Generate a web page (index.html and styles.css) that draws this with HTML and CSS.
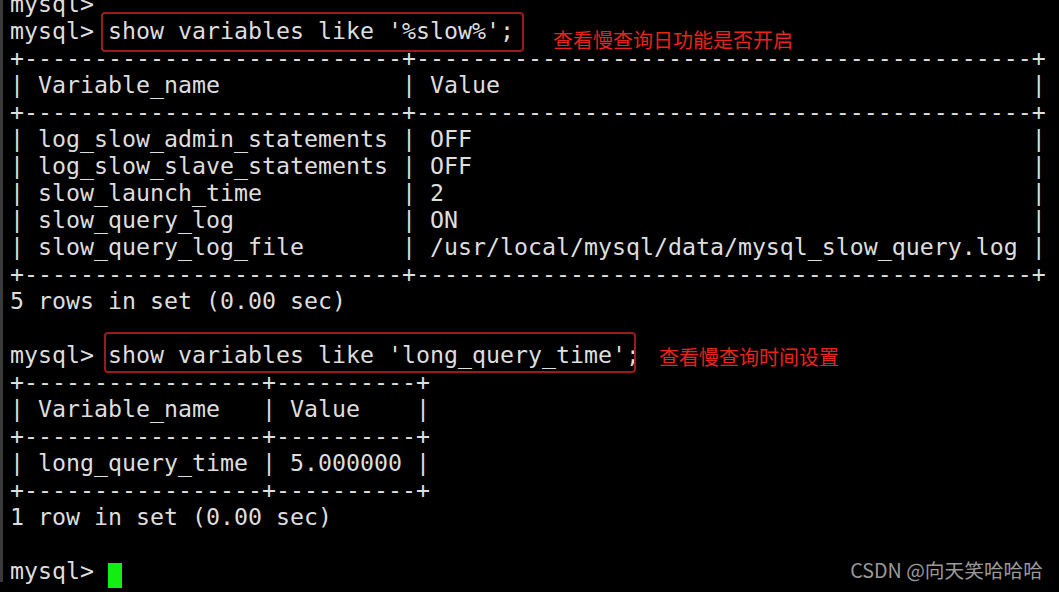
FILE: index.html
```html
<!DOCTYPE html>
<html>
<head>
<meta charset="utf-8">
<link rel="stylesheet" href="styles.css">
</head>
<body>
<div class="term">
<div class="line">mysql&gt;</div>
<div class="line">mysql&gt; <span class="cmd cmd-a">show variables like '%slow%';</span><span class="note note-a">查看慢查询日功能是否开启</span></div>
<div class="line">+---------------------------+--------------------------------------------+</div>
<div class="line">| Variable_name             | Value                                      |</div>
<div class="line">+---------------------------+--------------------------------------------+</div>
<div class="line">| log_slow_admin_statements | OFF                                        |</div>
<div class="line">| log_slow_slave_statements | OFF                                        |</div>
<div class="line">| slow_launch_time          | 2                                          |</div>
<div class="line">| slow_query_log            | ON                                         |</div>
<div class="line">| slow_query_log_file       | /usr/local/mysql/data/mysql_slow_query.log |</div>
<div class="line">+---------------------------+--------------------------------------------+</div>
<div class="line">5 rows in set (0.00 sec)</div>
<div class="line"> </div>
<div class="line">mysql&gt; <span class="cmd cmd-b">show variables like 'long_query_time';</span><span class="note note-b">查看慢查询时间设置</span></div>
<div class="line">+-----------------+----------+</div>
<div class="line">| Variable_name   | Value    |</div>
<div class="line">+-----------------+----------+</div>
<div class="line">| long_query_time | 5.000000 |</div>
<div class="line">+-----------------+----------+</div>
<div class="line">1 row in set (0.00 sec)</div>
<div class="line"> </div>
<div class="line">mysql&gt; <span class="cursor"> </span></div>
</div>
<div class="watermark">CSDN @向天笑哈哈哈</div>
</body>
</html>
```

FILE: styles.css
```css
html, body {
  margin: 0;
  padding: 0;
  background: #000;
  height: 100%;
  overflow: hidden;
}

body {
  position: relative;
}

.term {
  border-left: 3px solid #3a3a3a;
  height: 100%;
  box-sizing: border-box;
  padding-left: 7px;
  color: #dedede;
  font-family: "DejaVu Sans Mono", monospace;
  font-size: 23.25px;
}

.term > .line:first-child {
  margin-top: -10px;
}

.line {
  white-space: pre;
  height: 27px;
  line-height: 27px;
}

.cmd {
  position: relative;
}

.cmd::after {
  content: "";
  position: absolute;
  border: 2px solid #9a1b1b;
  border-radius: 4px;
}

.cmd-a::after {
  left: -7px;
  right: -10px;
  top: -5px;
  bottom: -8px;
}

.cmd-b::after {
  left: -4px;
  right: 4px;
  top: -9px;
  bottom: -5px;
}

.note {
  position: relative;
  font-family: "Noto Sans CJK SC", sans-serif;
  font-size: 20px;
  color: #e8231b;
}

.note-a {
  margin-left: 39px;
  top: 9px;
}

.note-b {
  margin-left: 19px;
  top: 2px;
}

.cursor {
  display: inline-block;
  width: 14px;
  height: 25px;
  background: #12ee12;
  vertical-align: -6px;
}

.watermark {
  position: absolute;
  right: 16px;
  bottom: 8px;
  font-family: "Noto Sans CJK SC", sans-serif;
  font-size: 19.7px;
  color: #9a9a9a;
}
```
